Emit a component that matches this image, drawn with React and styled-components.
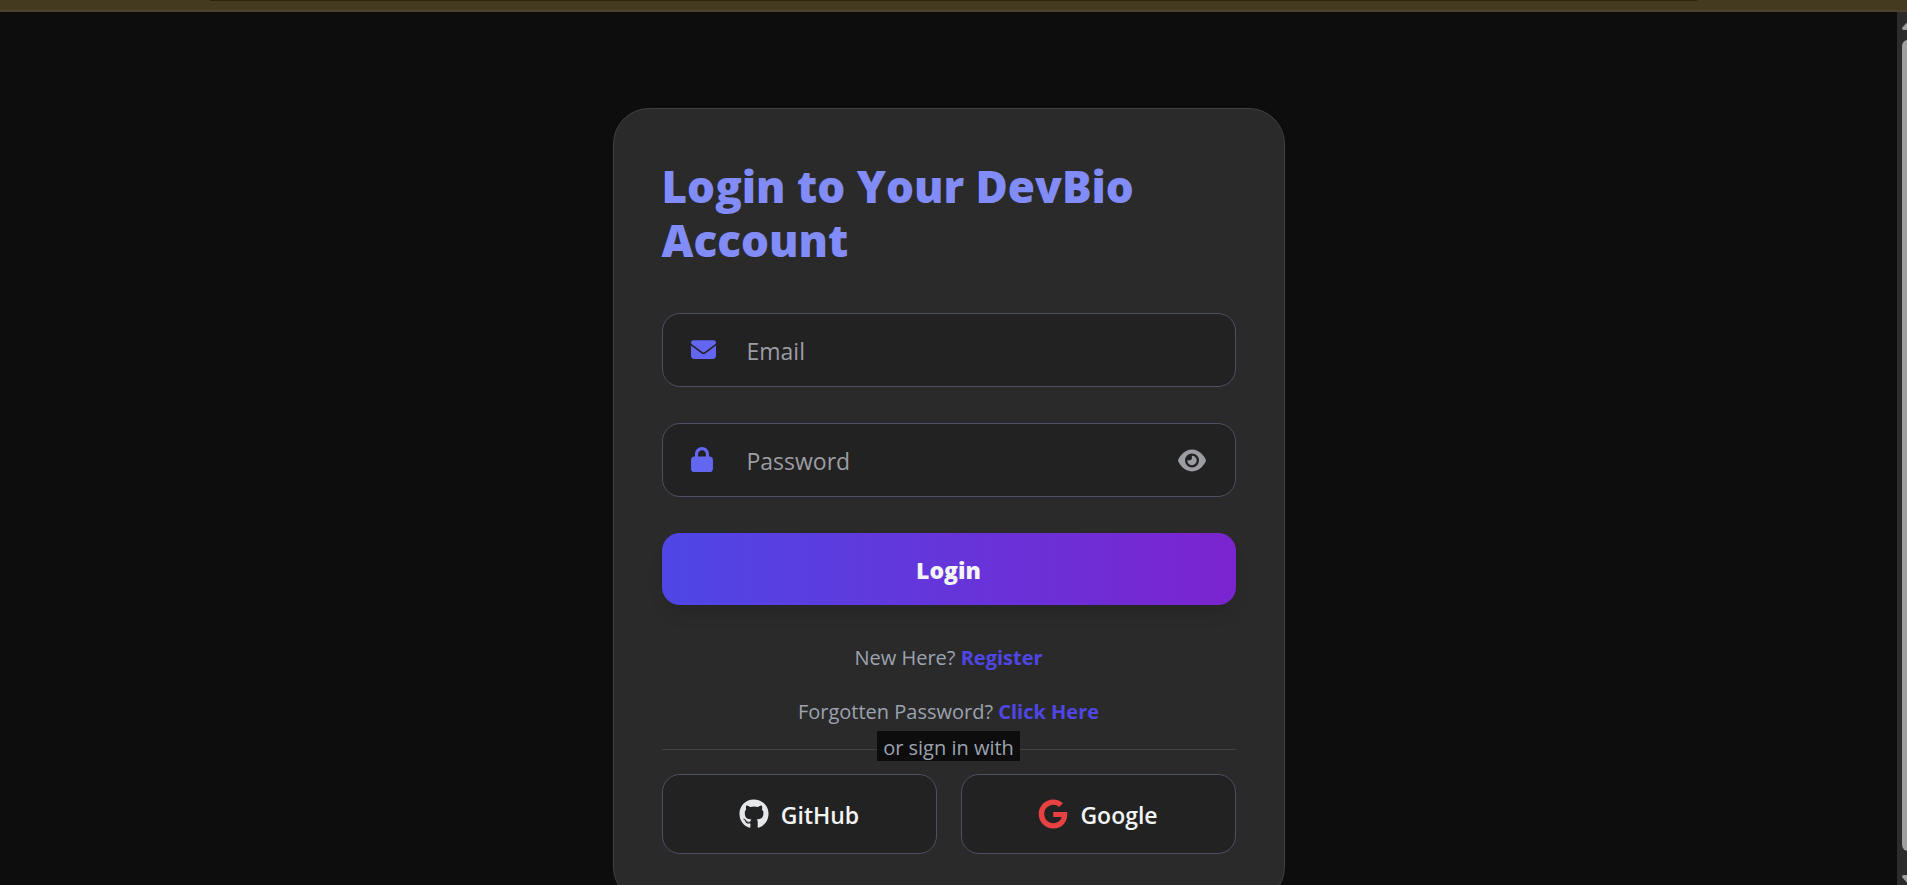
import React, { useState } from "react";
import styled, { createGlobalStyle } from "styled-components";
import { FaEnvelope, FaLock, FaEye, FaGithub, FaGoogle } from "react-icons/fa6";

const LoginPage = () => {
  const [email, setEmail] = useState("");
  const [password, setPassword] = useState("");
  const [visible, setVisible] = useState(false);

  return (
    <Page>
      <TopBar>
        <TopLine />
      </TopBar>
      <Body>
        <Main>
          <Card>
            <Title>Login to Your DevBio Account</Title>
            <form onSubmit={(e) => e.preventDefault()}>
              <Field>
                <FieldIcon $width="25px">
                  <FaEnvelope />
                </FieldIcon>
                <input
                  type="email"
                  aria-label="Email"
                  placeholder="Email"
                  value={email}
                  onChange={(e) => setEmail(e.target.value)}
                />
              </Field>
              <Field>
                <FieldIcon $width="22px">
                  <FaLock />
                </FieldIcon>
                <input
                  type={visible ? "text" : "password"}
                  aria-label="Password"
                  placeholder="Password"
                  value={password}
                  onChange={(e) => setPassword(e.target.value)}
                />
                <EyeButton
                  type="button"
                  aria-label="Show password"
                  onClick={() => setVisible(!visible)}
                >
                  <FaEye />
                </EyeButton>
              </Field>
              <LoginButton type="submit">Login</LoginButton>
            </form>
            <Links>
              <Hint>
                New Here? <a href="#register">Register</a>
              </Hint>
              <Hint>
                Forgotten Password? <a href="#reset">Click Here</a>
              </Hint>
            </Links>
            <Divider>
              <span>or sign in with</span>
            </Divider>
            <Socials>
              <SocialButton type="button" $icon="#e5e7eb">
                <FaGithub />
                <span>GitHub</span>
              </SocialButton>
              <SocialButton type="button" $icon="#e84142">
                <FaGoogle />
                <span>Google</span>
              </SocialButton>
            </Socials>
          </Card>
        </Main>
        <Scrollbar aria-hidden="true">
          <svg width="16" height="10" viewBox="0 0 16 10">
            <path d="M8 0 L15 8 Q15 10 13 10 H3 Q1 10 1 8 Z" />
          </svg>
          <Thumb />
          <svg width="16" height="10" viewBox="0 0 16 10">
            <path d="M8 10 L15 2 Q15 0 13 0 H3 Q1 0 1 2 Z" />
          </svg>
        </Scrollbar>
      </Body>
    </Page>
  );
};

const GlobalStyle = createGlobalStyle`
  * {
    box-sizing: border-box;
  }

  body {
    margin: 0;
    background-color: #0d0d0d;
    font-family: "Open Sans", "Noto Sans", sans-serif;
  }

  button,
  input {
    font-family: inherit;
  }
`;

const Page = styled.div`
  display: flex;
  flex-direction: column;
  height: 100vh;
  overflow: hidden;
`;

const TopBar = styled.div`
  flex: none;
  height: 12px;
  background-color: #433a20;
  border-bottom: 2px solid #4b4231;
`;

const TopLine = styled.div`
  width: 78%;
  height: 1px;
  margin: 0 auto;
  background-color: #2d240c;
`;

const Body = styled.div`
  display: flex;
  flex: 1;
  min-height: 0;
`;

const Main = styled.main`
  flex: 1;
  padding: 96px 24px;
  overflow: hidden;
`;

const Card = styled.section`
  max-width: 672px;
  margin: 0 auto;
  padding: 48px;
  background-color: #2a2a2a;
  border: 1px solid #414144;
  border-radius: 36px;
`;

const Title = styled.h1`
  margin: 0 0 46px;
  padding-top: 2px;
  color: #818cf8;
  font-size: 44px;
  font-weight: 800;
  line-height: 54px;
`;

const Field = styled.div`
  display: flex;
  align-items: center;
  height: 74px;
  margin-bottom: 36px;
  padding: 0 28px;
  background-color: #222222;
  border: 1px solid #4b5063;
  border-radius: 18px;

  input {
    flex: 1;
    min-width: 0;
    padding: 2px 0 0;
    color: #e5e7eb;
    background: none;
    border: none;
    outline: none;
    font-size: 23px;
  }

  input::placeholder {
    color: #9c9ca3;
  }
`;

const FieldIcon = styled.span`
  display: flex;
  flex: none;
  width: 56px;
  padding-bottom: 2px;
  color: #6366f1;

  svg {
    width: ${(props) => props.$width};
    height: 25px;
  }
`;

const EyeButton = styled.button`
  display: flex;
  padding: 0;
  margin-right: 1px;
  color: #9c9ca3;
  background: none;
  border: none;
  cursor: pointer;

  svg {
    width: 28px;
    height: 25px;
  }
`;

const LoginButton = styled.button`
  width: 100%;
  height: 72px;
  padding: 2px 0 0;
  color: #f3f4f6;
  background: linear-gradient(to right, #4f46e5, #7b24cf);
  border: none;
  border-radius: 18px;
  box-shadow: 0 12px 18px -4px rgba(0, 0, 0, 0.1);
  font-size: 23px;
  font-weight: 800;
  cursor: pointer;
`;

const Links = styled.div`
  display: flex;
  flex-direction: column;
  gap: 24px;
  margin: 38px 0 4px;
`;

const Hint = styled.p`
  margin: 0;
  color: #9ca3af;
  font-size: 20px;
  line-height: 30px;
  text-align: center;

  a {
    color: #4f46e5;
    font-weight: 700;
    text-decoration: none;
  }
`;

const Divider = styled.div`
  display: flex;
  align-items: center;
  height: 36px;
  color: #9ca3af;
  font-size: 20px;
  line-height: 26px;

  &::before,
  &::after {
    content: "";
    flex: 1;
    height: 1px;
    background-color: #414144;
  }

  span {
    align-self: flex-start;
    padding: 4px 6px 0;
    background-color: #0d0d0d;
  }
`;

const Socials = styled.div`
  display: grid;
  grid-template-columns: 1fr 1fr;
  gap: 24px;
  margin-top: 7px;
`;

const SocialButton = styled.button`
  display: flex;
  align-items: center;
  justify-content: center;
  gap: 12px;
  height: 80px;
  color: #f3f4f6;
  background-color: #222222;
  border: 1px solid #4b5063;
  border-radius: 18px;
  font-size: 23px;
  font-weight: 600;
  cursor: pointer;

  svg {
    color: ${(props) => props.$icon};
    font-size: 30px;
  }

  span {
    padding-top: 2px;
  }
`;

const Scrollbar = styled.div`
  display: flex;
  flex-direction: column;
  flex: none;
  gap: 10px;
  width: 10px;
  padding: 8px 0 0 4px;
  overflow: hidden;
  background-color: #2c2c2c;

  svg {
    flex: none;
    fill: #9f9f9f;
  }
`;

const Thumb = styled.div`
  flex: 1;
  width: 12px;
  margin: 0 0 14px 1px;
  background-color: #9f9f9f;
  border-radius: 6px;
`;

const App = () => (
  <>
    <GlobalStyle />
    <LoginPage />
  </>
);

export default App;
